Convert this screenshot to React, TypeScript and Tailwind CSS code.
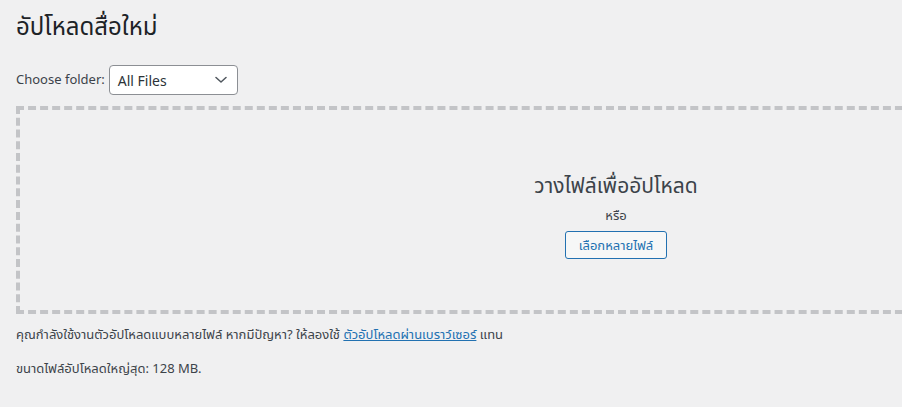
import React from "react";

export default function App() {
  return (
    <div
      className="w-[902px] h-[407px] overflow-hidden bg-[#f0f0f1] text-[#3c434a] text-[13px]"
      style={{ fontFamily: '"Noto Sans", "Noto Sans Thai", "Noto Sans CJK SC", sans-serif' }}
    >
      <div className="pl-4 pt-[10px]">
        <h1 className="text-[24px] leading-[32px] font-normal text-[#1d2327] m-0">อัปโหลดสื่อใหม่</h1>
        <div className="mt-[23px] flex items-center gap-[4px] h-[30px]">
          <span className="text-[13px] text-[#3c434a]">Choose folder:</span>
          <div className="relative w-[129px] h-[30px] border border-[#8c8f94] rounded-[4px] bg-white flex items-center pl-[8px]">
            <span className="text-[14px] text-[#2c3338]">All Files</span>
            <svg className="absolute right-[10px] top-[10px]" width="12" height="8" viewBox="0 0 12 8" fill="none">
              <path d="M1 1.5 L6 6 L11 1.5" stroke="#50575e" strokeWidth="1.5" strokeLinecap="round" strokeLinejoin="round" />
            </svg>
          </div>
        </div>
        <div className="mt-[11px] w-[1200px] h-[208px] border-4 border-dashed border-[#c3c4c7] flex flex-col items-center justify-center">
          <div className="text-[21px] leading-[28px] text-[#3c434a] mt-[10px]">วางไฟล์เพื่ออัปโหลด</div>
          <div className="text-[13px] leading-[20px] text-[#3c434a] mt-[6px]">หรือ</div>
          <button className="mt-[6px] h-[28px] px-[13px] border border-[#2271b1] text-[#2271b1] bg-[#f6f7f7] rounded-[3px] text-[13px] leading-[26px]">
            เลือกหลายไฟล์
          </button>
        </div>
        <p className="mt-[10px] text-[13px] leading-[20px] text-[#3c434a]">
          คุณกำลังใช้งานตัวอัปโหลดแบบหลายไฟล์ หากมีปัญหา? ให้ลองใช้{" "}
          <a className="text-[#2271b1] underline" href="#">ตัวอัปโหลดผ่านเบราว์เซอร์</a> แทน
        </p>
        <p className="mt-[14px] text-[13px] leading-[20px] text-[#3c434a]">ขนาดไฟล์อัปโหลดใหญ่สุด: 128 MB.</p>
      </div>
    </div>
  );
}
